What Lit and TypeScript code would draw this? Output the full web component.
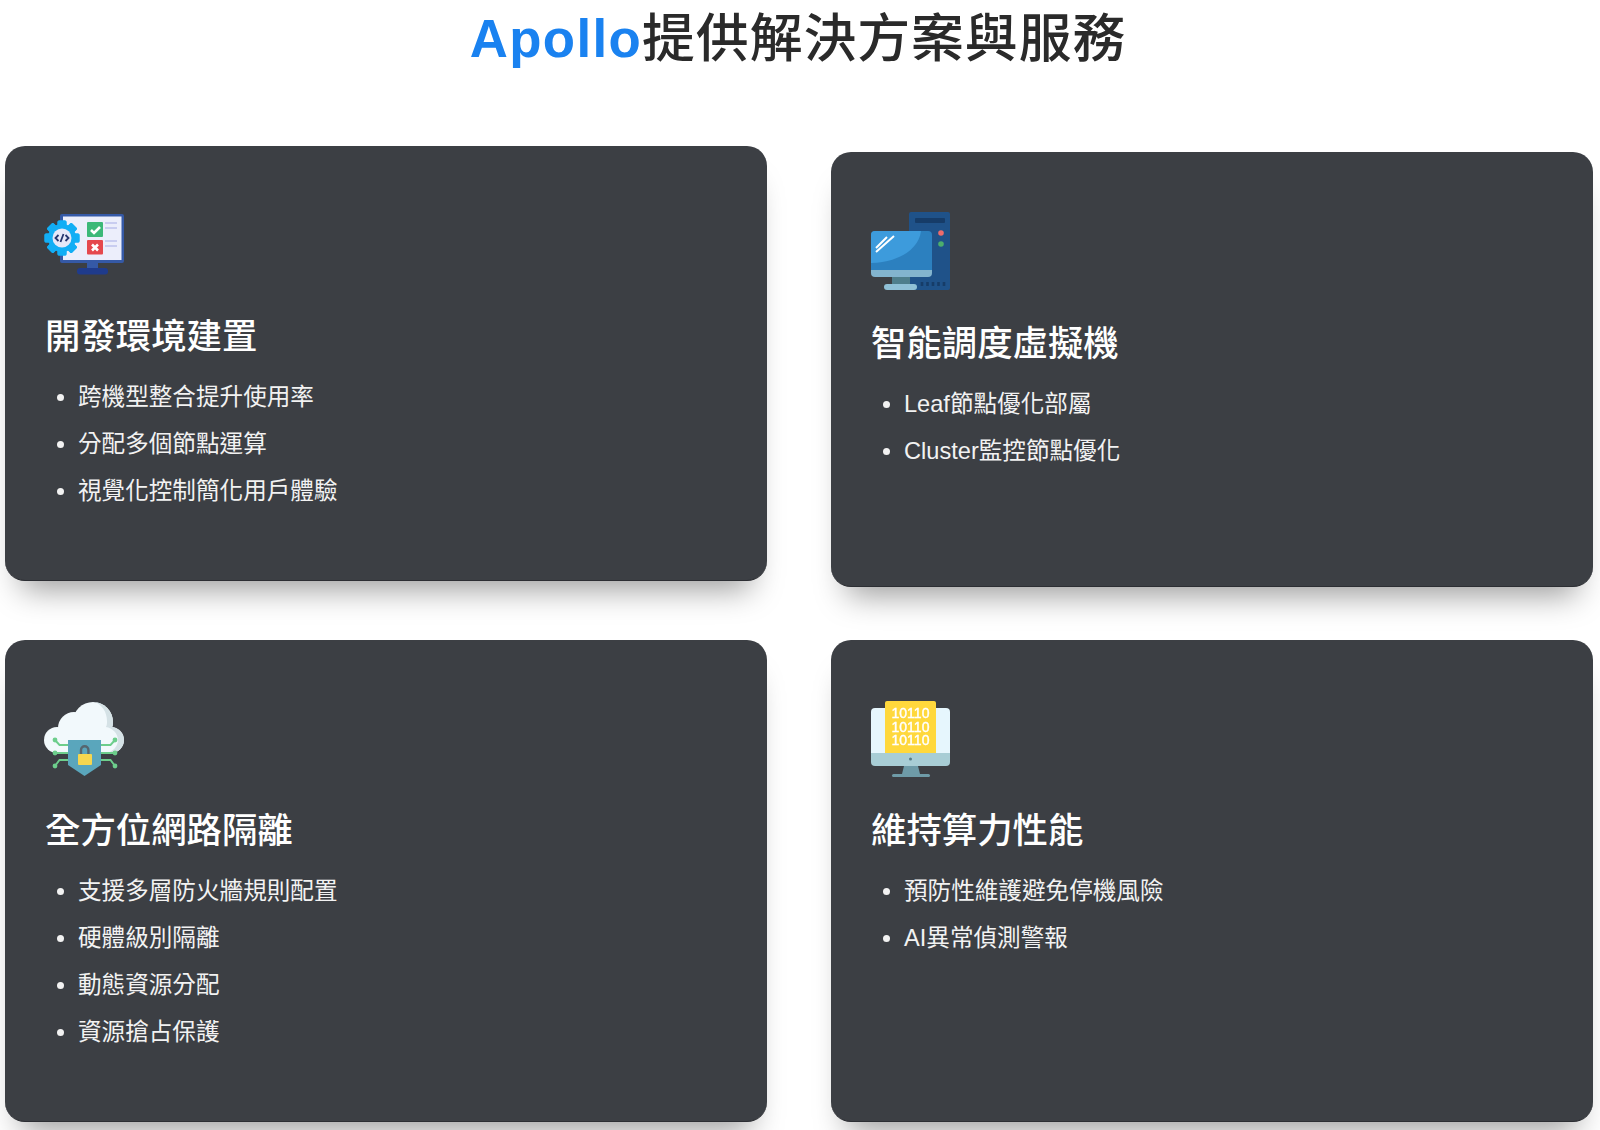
import { LitElement, html, css, svg } from "lit";
import { customElement } from "lit/decorators.js";

const gearTeeth = Array.from({ length: 8 }, (_, i) => i * 45);

const icons = {
  dev: svg`
    <rect x="15" y="8" width="64" height="49" rx="2" fill="#3559a6"/>
    <rect x="18" y="10.500" width="58.500" height="43.500" fill="#eceefb"/>
    <rect x="42" y="57" width="11" height="6" fill="#3559a6"/>
    <rect x="32" y="62" width="31" height="6.500" rx="3" fill="#1f3b8c"/>
    <rect x="42" y="16" width="16" height="15" rx="1" fill="#3cb878"/>
    <path d="M46 24l3 3 6-6" fill="none" stroke="#fff" stroke-width="2.600"/>
    <rect x="42" y="34" width="16" height="14.500" rx="1" fill="#e5484d"/>
    <path d="M47 38.500l6 6M53 38.500l-6 6" fill="none" stroke="#fff" stroke-width="2.600"/>
    <path d="M60 17h12M60 22h12M60 35h12M60 40h12" stroke="#c9cdf0" stroke-width="1.800"/>
    ${gearTeeth.map(
      (a) => svg`<rect x="12.500" y="14.500" width="9" height="35" rx="1.500" fill="#12aef5" transform="rotate(${a} 17 32)"/>`
    )}
    <circle cx="17" cy="32" r="14" fill="#12aef5"/>
    <circle cx="17" cy="32" r="9.500" fill="#e6e8f8"/>
    <path d="M13.500 29l-3 3 3 3M20.500 29l3 3-3 3M18.500 28l-3 8" fill="none" stroke="#26356e" stroke-width="1.800"/>`,
  server: svg`
    <rect x="38" y="-1" width="41" height="78" rx="2" fill="#1f5289"/>
    <rect x="44" y="5" width="30" height="5" rx="1" fill="#163c68"/>
    <circle cx="70" cy="20" r="2.800" fill="#ee6b6b"/>
    <circle cx="70" cy="31" r="2.800" fill="#4cae6c"/>
    <path d="M51 69v4M56.500 69v4M62 69v4M67.500 69v4M73 69v4" stroke="#163c68" stroke-width="2.600"/>
    <path d="M0 57V22a4 4 0 0 1 4-4h53a4 4 0 0 1 4 4v35z" fill="#2c80bf"/>
    <path d="M0 50V22a4 4 0 0 1 4-4h46c-2 17-20 31-50 32z" fill="#3d9bdc"/>
    <path d="M0 57h61v3a4 4 0 0 1-4 4H4a4 4 0 0 1-4-4z" fill="#83b4ce"/>
    <rect x="21" y="64" width="18" height="8" fill="#4e7e8c"/>
    <rect x="13" y="71" width="33" height="6" rx="3" fill="#8fc0d6"/>
    <path d="M5 33l11-11M5 37l18-16" stroke="#fff" stroke-width="2" transform="translate(0 2)"/>`,
  cloud: svg`
    <g fill="#f2f9fc">
      <circle cx="48" cy="22" r="20"/><circle cx="29" cy="28" r="16"/><circle cx="12" cy="40" r="13"/><circle cx="66" cy="40" r="13"/>
      <rect x="12" y="28" width="54" height="25"/>
    </g>
    <path d="M50 2c10 1 18 10 18 20 0 2 0 4-1 5 7 1 12 7 12 13 0 7-6 13-13 13h-5c7-1 12-7 12-13 0-7-6-12-12-13 1-2 1-4 1-6 0-9-5-16-12-19z" fill="#d5e2e6"/>
    <path d="M24 45h-9.500l-4.500-5M24 53H10M24 60h-9.500l-4.500 6M56 45h9.500l4.500-5M56 53h14M56 60h9.500l4.500 6" fill="none" stroke="#6dce8c" stroke-width="1.900"/>
    <g fill="#6dce8c"><circle cx="10" cy="40" r="2.400"/><circle cx="10" cy="53" r="2.400"/><circle cx="10" cy="66" r="2.400"/><circle cx="70" cy="40" r="2.400"/><circle cx="70" cy="53" r="2.400"/><circle cx="70" cy="66" r="2.400"/></g>
    <path d="M23 40h33v25L39.500 76 23 65z" fill="#5aa6bc"/>
    <path d="M36 55v-5a3.700 3.700 0 0 1 7.400 0v5" fill="none" stroke="#56666f" stroke-width="2.400"/>
    <rect x="33" y="54" width="14" height="11" rx="1" fill="#f6d64f"/>`,
  binary: svg`
    <path d="M0 53V12a4 4 0 0 1 4-4h71a4 4 0 0 1 4 4v41z" fill="#e6f6fd"/>
    <path d="M0 53h79v9a4 4 0 0 1-4 4H4a4 4 0 0 1-4-4z" fill="#a8cdd5"/>
    <path d="M33 66h14l2 8H31z" fill="#6e9ba8"/>
    <rect x="21" y="74" width="38" height="3" rx="1.500" fill="#6e9ba8"/>
    <circle cx="39.500" cy="59" r="1.500" fill="#557a85"/>
    <path d="M14 53V3a2 2 0 0 1 2-2h47a2 2 0 0 1 2 2v50z" fill="#ffd83c"/>`,
};

const cards = [
  { icon: icons.dev, title: "開發環境建置", items: ["跨機型整合提升使用率", "分配多個節點運算", "視覺化控制簡化用戶體驗"], lifted: true, bits: false },
  { icon: icons.server, title: "智能調度虛擬機", items: ["Leaf節點優化部屬", "Cluster監控節點優化"], lifted: false, bits: false },
  { icon: icons.cloud, title: "全方位網路隔離", items: ["支援多層防火牆規則配置", "硬體級別隔離", "動態資源分配", "資源搶占保護"], lifted: false, bits: false },
  { icon: icons.binary, title: "維持算力性能", items: ["預防性維護避免停機風險", "AI異常偵測警報"], lifted: false, bits: true },
];

@customElement("app-root")
export class AppRoot extends LitElement {
  static styles = css`
    :host {
      display: block;
      width: 1600px;
      height: 1130px;
      overflow: hidden;
      background: #fff;
      font-family: "Liberation Sans", "Noto Sans CJK TC", sans-serif;
    }
    h1 {
      margin: 0;
      padding-right: 4px;
      height: 78px;
      line-height: 78px;
      text-align: center;
      font-size: 52.8px;
      font-weight: 500;
      letter-spacing: 1px;
      color: #2a2a2a;
    }
    h1 span {
      color: #1a82f0;
      font-weight: 700;
      letter-spacing: 1.35px;
    }
    .grid {
      display: grid;
      grid-template-columns: 762px 762px;
      grid-template-rows: 435px 482px;
      column-gap: 64px;
      row-gap: 53px;
      padding: 74px 7px 0 5px;
    }
    .card {
      box-sizing: border-box;
      padding: 60px 40px 0;
      background: #3c3f44;
      border-radius: 20px;
      border-bottom: 1px solid #2c2e33;
      box-shadow: 0 24px 32px -16px rgba(0, 0, 0, 0.4);
      color: #fff;
    }
    .card:nth-child(2) {
      padding-top: 61px;
    }
    .lifted {
      transform: translateY(-6px);
    }
    .icon {
      display: block;
      width: 80px;
      height: 80px;
      overflow: visible;
      filter: blur(0.4px);
    }
    .icon text {
      font-family: "Liberation Sans", sans-serif;
      font-size: 14px;
      font-weight: 400;
      fill: #fff;
      stroke: #fff;
      stroke-width: 0.4px;
      text-anchor: middle;
    }
    h2 {
      margin: 27px 0 0;
      font-size: 35.4px;
      line-height: 48px;
      font-weight: 500;
    }
    ul {
      margin: 13px 0 0;
      padding: 0 0 0 33px;
      list-style: disc;
    }
    li {
      font-size: 23.6px;
      line-height: 47px;
      color: #f2f2f2;
    }
  `;

  render() {
    return html`
      <h1><span>Apollo</span>提供解決方案與服務</h1>
      <div class="grid">
        ${cards.map(
          (c) => html`
            <section class="card ${c.lifted ? "lifted" : ""}">
              <svg class="icon" viewBox="0 0 80 80">
                ${c.icon}
                ${c.bits
                  ? svg`<text x="39.500" y="18">10110</text><text x="39.500" y="31.500">10110</text><text x="39.500" y="45">10110</text>`
                  : ""}
              </svg>
              <h2>${c.title}</h2>
              <ul>
                ${c.items.map((i) => html`<li>${i}</li>`)}
              </ul>
            </section>
          `
        )}
      </div>
    `;
  }
}
